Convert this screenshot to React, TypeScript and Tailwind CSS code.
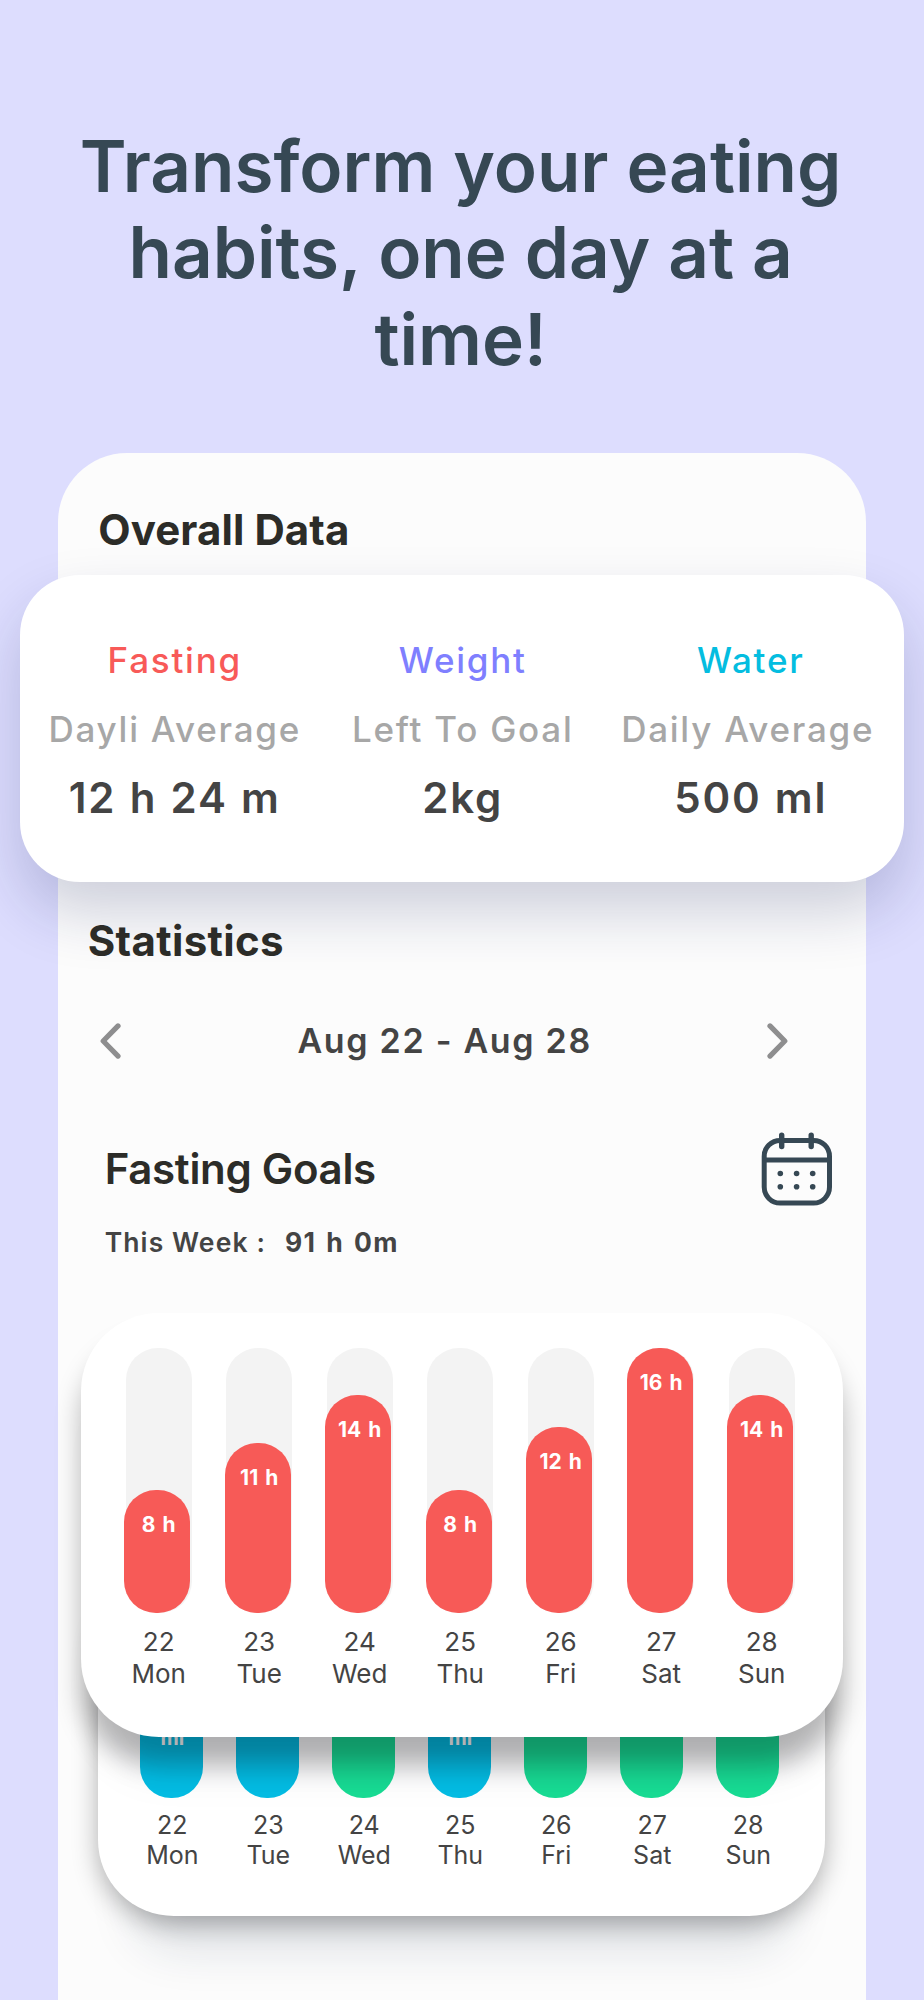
interface Stat {
  title: string;
  caption: string;
  value: string;
  color: string;
  captionShift: string;
}

interface Day {
  date: number;
  name: string;
  hours: number;
  height: number;
  water: string;
  unit?: string;
}

const stats: Stat[] = [
  { title: "Fasting", caption: "Dayli Average", value: "12 h 24 m", color: "text-[#f85a58]", captionShift: "" },
  { title: "Weight", caption: "Left To Goal", value: "2kg", color: "text-[#7f7fff]", captionShift: "" },
  { title: "Water", caption: "Daily Average", value: "500 ml", color: "text-[#04bde0]", captionShift: "mr-[6px]" },
];

const days: Day[] = [
  { date: 22, name: "Mon", hours: 8, height: 122.5, water: "bg-[#04bde4]", unit: "ml" },
  { date: 23, name: "Tue", hours: 11, height: 170, water: "bg-[#04bde4]" },
  { date: 24, name: "Wed", hours: 14, height: 217.5, water: "bg-[#18dc94]" },
  { date: 25, name: "Thu", hours: 8, height: 122.5, water: "bg-[#04bde4]", unit: "ml" },
  { date: 26, name: "Fri", hours: 12, height: 185.5, water: "bg-[#18dc94]" },
  { date: 27, name: "Sat", hours: 16, height: 265.5, water: "bg-[#18dc94]" },
  { date: 28, name: "Sun", hours: 14, height: 217.5, water: "bg-[#18dc94]" },
];

function CalendarIcon() {
  return (
    <svg width="72" height="75" viewBox="0 0 72 75" fill="none" stroke="#364854" strokeWidth="5">
      <rect x="3.2" y="9.4" width="65.3" height="62.7" rx="16" />
      <path d="M3.2 29.1h65.3" />
      <path d="M20.7 4.1v11.4M50.2 4.1v11.4" strokeLinecap="round" strokeWidth="5.4" />
      <g fill="#364854" stroke="none">
        <circle cx="19.3" cy="42.5" r="2.8" />
        <circle cx="35.6" cy="42.5" r="2.8" />
        <circle cx="51.7" cy="42.5" r="2.8" />
        <circle cx="19.3" cy="55.8" r="2.8" />
        <circle cx="35.6" cy="55.8" r="2.8" />
        <circle cx="51.7" cy="55.8" r="2.8" />
      </g>
    </svg>
  );
}

function Chevron({ flip }: { flip?: boolean }) {
  return (
    <svg
      width="22"
      height="36"
      viewBox="0 0 22 36"
      fill="none"
      stroke="#8e8e8f"
      strokeWidth="5.2"
      strokeLinecap="round"
      strokeLinejoin="round"
      className={flip ? "rotate-180" : ""}
    >
      <path d="M18 2.9 3.2 18 18 33.1" />
    </svg>
  );
}

function StatsCard() {
  return (
    <section className="relative z-10 -ml-[37.7px] mt-[12px] grid h-[307px] w-[884px] grid-cols-[308px_268px_308px] rounded-[60px] bg-white pt-[64.5px] text-center shadow-[0_30px_60px_rgba(20,30,90,0.2)]">
      {stats.map((s) => (
        <div key={s.title} className="flex flex-col items-center pl-[1.5px] whitespace-nowrap">
          <p className={`text-[35px] leading-[40px] font-medium tracking-[1.75px] ${s.color}`}>{s.title}</p>
          <p className={`mt-[29.5px] text-[35px] leading-[40px] font-medium tracking-[1.75px] text-[#a7a7a7] ${s.captionShift}`}>
            {s.caption}
          </p>
          <p className="mt-[24.5px] text-[42px] leading-[48px] font-semibold tracking-[1.8px] text-[#444] [word-spacing:1px]">{s.value}</p>
        </div>
      ))}
    </section>
  );
}

function FastingChart() {
  return (
    <section className="relative z-10 ml-[23.3px] mt-[48px] h-[423.5px] w-[762px] rounded-[78px] bg-white pl-[44.7px] pt-[34.5px] shadow-[0_28px_26px_rgba(0,0,0,0.27),0_60px_50px_-30px_rgba(20,30,60,0.08)]">
      <div className="flex gap-[34.5px]">
        {days.map((d) => (
          <div key={d.date} className="flex w-[66px] flex-col items-center">
            <div className="flex h-[265px] w-full flex-col justify-end rounded-[32px] bg-[#f3f3f3]">
              <div
                className="-ml-[1.3px] w-[66px] rounded-[32px] bg-[#f75a57] pt-[22px] pl-[2.6px] text-center text-[21px] leading-[26px] font-bold text-white [word-spacing:2px]"
                style={{ height: d.height }}
              >
                {d.hours} h
              </div>
            </div>
            <p className="mt-[13.5px] text-center text-[26px] leading-[32px] text-[#444]">
              {d.date}
              <br />
              {d.name}
            </p>
          </div>
        ))}
      </div>
    </section>
  );
}

function WaterChart() {
  return (
    <section className="-mt-[160px] ml-[40.3px] flex h-[339.5px] w-[727.5px] gap-[32.7px] rounded-[76px] bg-white pl-[41.7px] shadow-[0_7px_26px_rgba(0,0,0,0.3),0_70px_50px_-40px_rgba(20,40,70,0.14)]">
      {days.map((d) => (
        <div key={d.date} className="flex w-[63.3px] flex-col items-center">
          <div className={`h-[221px] w-full rounded-[31px] pt-[148.5px] pl-[2px] text-center text-[20px] leading-[26px] font-bold text-white ${d.water}`}>
            {d.unit}
          </div>
          <p className="mt-[12px] pl-[2px] text-center text-[25px] leading-[30.5px] text-[#444]">
            {d.date}
            <br />
            {d.name}
          </p>
        </div>
      ))}
    </section>
  );
}

export default function App() {
  return (
    <main className="h-[2000px] w-[924px] overflow-hidden bg-[#ddddfe] pt-[123px] font-['Inter',sans-serif]">
      <h1 className="ml-[60.6px] w-[800px] text-center text-[71px] leading-[86.4px] font-semibold text-[#364854]">
        Transform your eating
        <br />
        habits, one day at a
        <br />
        time!
      </h1>

      <div className="mt-[70.8px] ml-[57.7px] h-[1600px] w-[808.3px] rounded-t-[69px] bg-[#fcfcfc] pt-[47px]">
        <h2 className="ml-[40.5px] h-[63px] text-[42px] leading-[60px] font-bold tracking-[0.1px] text-[#2c2c28]">
          Overall Data
        </h2>

        <StatsCard />

        <h2 className="relative z-10 mt-[29px] ml-[30px] h-[61px] text-[42px] leading-[60px] font-bold tracking-[0.35px] text-[#2c2c28]">
          Statistics
        </h2>

        <div className="mt-[50px] ml-[42px] flex w-[688px] items-center justify-between">
          <Chevron />
          <p className="pt-px pl-[2px] text-[34px] leading-[36px] font-semibold tracking-[1.7px] text-[#444]">Aug 22 - Aug 28</p>
          <Chevron flip />
        </div>

        <div className="mt-[72px] ml-[47px] flex w-[728px] justify-between">
          <div>
            <h3 className="text-[42px] leading-[76px] font-semibold tracking-[-0.3px] text-[#2c2c28]">Fasting Goals</h3>
            <p className="flex gap-[19px] pt-[13px] text-[26.5px] leading-[45px] font-semibold tracking-[1.1px] text-[#444]">
              <span>This Week :</span>
              <span className="font-bold tracking-[1.3px] [word-spacing:2.5px]">91 h 0m</span>
            </p>
          </div>
          <CalendarIcon />
        </div>

        <FastingChart />
        <WaterChart />
      </div>
    </main>
  );
}
